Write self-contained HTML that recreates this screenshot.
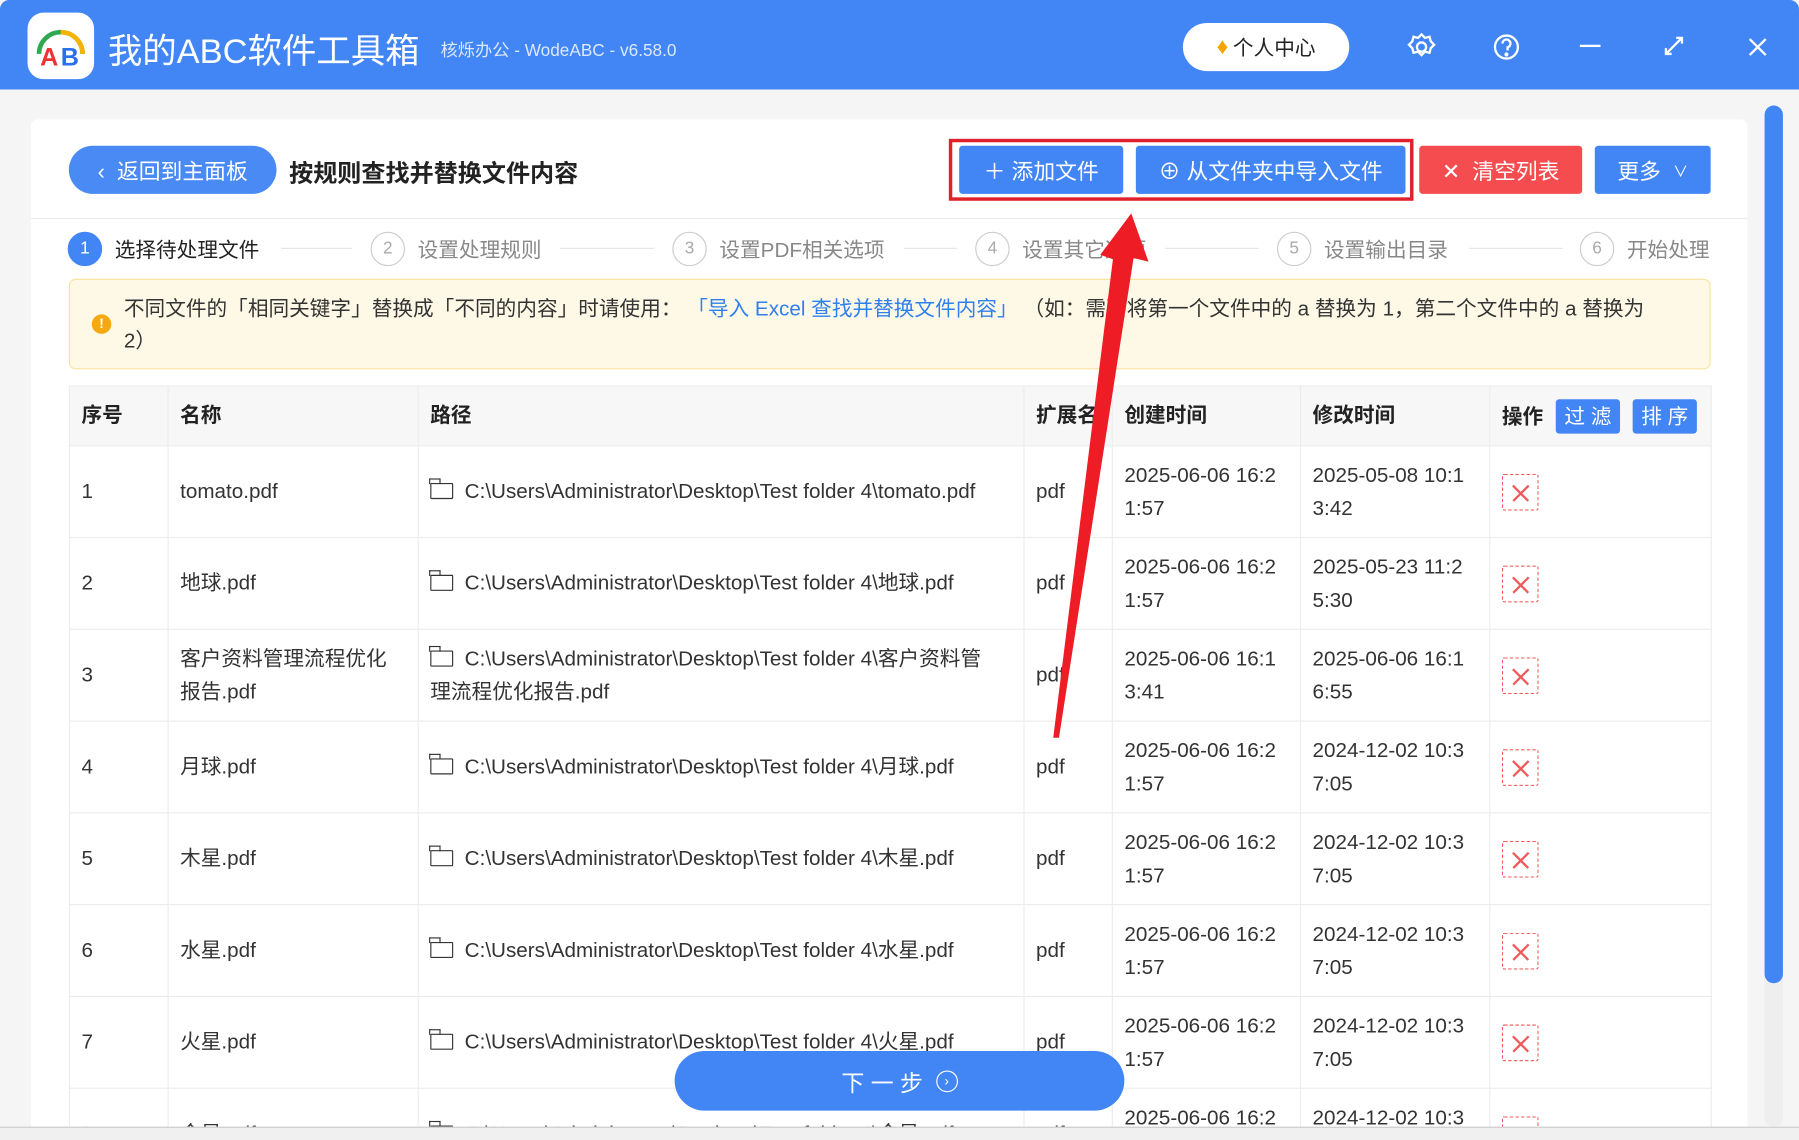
<!DOCTYPE html>
<html><head><meta charset="utf-8">
<style>
*{margin:0;padding:0;box-sizing:border-box}
body{width:1799px;height:1140px;overflow:hidden;background:#f0f0f0;font-family:"Liberation Sans","Noto Sans CJK SC",sans-serif}
#s{position:absolute;left:0;top:0;width:1568px;height:994px;transform:scale(1.14732);transform-origin:0 0;background:#f5f5f5;overflow:hidden}
.a{position:absolute}
.hdr{left:0;top:0;width:1568px;height:78px;background:#4286f5;border-radius:8px 8px 0 0}
.btn{position:absolute;color:#fff;font-size:18px;display:flex;align-items:center;justify-content:center;border-radius:3px}
.step{position:absolute;top:202px;font-size:18px;color:#888;display:flex;align-items:center}
.step i{display:inline-block;width:30px;height:30px;border:1px solid #ccc;border-radius:50%;font-style:normal;text-align:center;line-height:28px;font-size:15px;color:#aaa;margin-right:11px}
.line{position:absolute;top:216px;height:1px;background:#e6e6e6}
table{position:absolute;left:60px;top:336px;border-collapse:collapse;font-size:18px;color:#333;table-layout:fixed}
td,th{border:1px solid #ececec;padding:0 10px;text-align:left;vertical-align:middle;line-height:29px;white-space:nowrap;overflow:hidden}
th{height:52px;background:#f7f7f7;font-weight:bold;color:#222}
td{height:80px}
.del{display:inline-block;width:32px;height:32px;border:1px dashed #f05a5a;position:relative;border-radius:2px;vertical-align:middle}
.del:before,.del:after{content:"";position:absolute;left:6px;top:15px;width:19px;height:1.5px;background:#f05a5a;transform:rotate(45deg)}
.del:after{transform:rotate(-45deg)}
.fo{display:inline-block;width:20px;height:14px;border:1.6px solid #333;border-radius:1px;margin-right:10px;vertical-align:-1px;position:relative}
.fo:before{content:"";position:absolute;left:-2px;top:-5px;width:8px;height:4px;border:1.6px solid #333;border-bottom:none}
</style></head><body>
<div id="s">
<div class="a hdr"></div>
<div class="a" style="left:24px;top:11px;width:58px;height:58px;background:#fff;border-radius:14px"></div>
<svg class="a" style="left:24px;top:11px" width="58" height="58" viewBox="0 0 58 58">
<path d="M10 36 A19 19 0 0 1 48 36" fill="none" stroke="#2fa84f" stroke-width="4"/>
<path d="M29 17 A19 19 0 0 1 48 36" fill="none" stroke="#f6b400" stroke-width="4"/>
<text x="11" y="46" font-family="Liberation Sans" font-weight="bold" font-size="22" fill="#e33">A</text>
<text x="29" y="46" font-family="Liberation Sans" font-weight="bold" font-size="22" fill="#2a6ff0">B</text>
</svg>
<div class="a" style="left:94px;top:20px;font-size:30px;color:#fff">我的ABC软件工具箱</div>
<div class="a" style="left:384px;top:33px;font-size:15px;color:#dce8fd">核烁办公 - WodeABC - v6.58.0</div>
<div class="a" style="left:1031px;top:20px;width:145px;height:42px;background:#fff;border-radius:21px;font-size:18px;color:#222;display:flex;align-items:center;justify-content:center"><span style="color:#f6a400;margin-right:4px;font-size:20px">♦</span>个人中心</div>
<svg class="a" style="left:1226px;top:28px" width="26" height="26" viewBox="0 0 26 26" fill="none" stroke="#fff" stroke-width="2"><circle cx="13" cy="13" r="4"/><path d="M13 2l3 3 4-1 1 4 3 3-3 3-1 4-4-1-3 3-3-3-4 1-1-4-3-3 3-3 1-4 4 1z"/></svg>
<svg class="a" style="left:1300px;top:28px" width="26" height="26" viewBox="0 0 26 26" fill="none" stroke="#fff" stroke-width="2"><circle cx="13" cy="13" r="10"/><path d="M9.5 10a3.5 3.5 0 1 1 4.5 3.3V16"/><circle cx="13" cy="19.5" r=".8" fill="#fff"/></svg>
<div class="a" style="left:1377px;top:39px;width:18px;height:2px;background:#fff"></div>
<svg class="a" style="left:1449px;top:30px" width="20" height="20" viewBox="0 0 20 20" fill="none" stroke="#fff" stroke-width="2"><path d="M3 17L17 3M12 3h5v5M3 12v5h5"/></svg>
<svg class="a" style="left:1522px;top:31px" width="20" height="20" viewBox="0 0 20 20" stroke="#fff" stroke-width="2"><path d="M3 3L17 17M17 3L3 17"/></svg>

<div class="a" style="left:27px;top:104px;width:1496px;height:900px;background:#fff;border-radius:6px"></div>
<div class="a" style="left:27px;top:190px;width:1496px;height:1px;background:#ececec"></div>
<div class="btn" style="left:60px;top:127px;width:181px;height:42px;border-radius:21px;background:#4a8af4;font-size:19px">‹&nbsp;&nbsp;返回到主面板</div>
<div class="a" style="left:252px;top:135px;font-size:21px;font-weight:bold;color:#222">按规则查找并替换文件内容</div>
<div class="a" style="left:827px;top:121px;width:405px;height:54px;border:3px solid #e0202a"></div>
<div class="btn" style="left:836px;top:127px;width:143px;height:42px;background:#4286f5;font-size:19px">＋ 添加文件</div>
<div class="btn" style="left:990px;top:127px;width:235px;height:42px;background:#4286f5;font-size:19px">⊕ 从文件夹中导入文件</div>
<div class="btn" style="left:1237px;top:127px;width:142px;height:42px;background:#f54c4f;font-size:19px">✕&nbsp; 清空列表</div>
<div class="btn" style="left:1390px;top:127px;width:101px;height:42px;background:#4286f5;font-size:19px">更多 &nbsp;<span style="font-size:13px">∨</span></div>

<div class="step" style="left:59px;color:#222"><i style="background:#4286f5;border-color:#4286f5;color:#fff">1</i>选择待处理文件</div>
<div class="line" style="left:245px;width:62px"></div>
<div class="step" style="left:323px"><i>2</i>设置处理规则</div>
<div class="line" style="left:488px;width:82px"></div>
<div class="step" style="left:586px"><i>3</i>设置PDF相关选项</div>
<div class="line" style="left:788px;width:46px"></div>
<div class="step" style="left:850px"><i>4</i>设置其它选项</div>
<div class="line" style="left:1015px;width:82px"></div>
<div class="step" style="left:1113px"><i>5</i>设置输出目录</div>
<div class="line" style="left:1280px;width:82px"></div>
<div class="step" style="left:1377px"><i>6</i>开始处理</div>

<div class="a" style="left:60px;top:243px;width:1431px;height:79px;background:#fef9e6;border:1px solid #f8e3a0;border-radius:6px"></div>
<div class="a" style="left:80px;top:274px;width:17px;height:17px;border-radius:50%;background:#f6a90e;color:#fff;font-size:12px;font-weight:bold;text-align:center;line-height:17px">!</div>
<div class="a" style="left:108px;top:255px;width:1345px;font-size:18px;line-height:28px;color:#333">不同文件的「相同关键字」替换成「不同的内容」时请使用： <span style="color:#2f7fef">「导入 Excel 查找并替换文件内容」</span> （如：需要将第一个文件中的 a 替换为 1，第二个文件中的 a 替换为<br>2）</div>

<table>
<colgroup><col style="width:86px"><col style="width:218px"><col style="width:528px"><col style="width:77px"><col style="width:164px"><col style="width:165px"><col style="width:193px"></colgroup>
<tr><th>序号</th><th>名称</th><th>路径</th><th>扩展名</th><th>创建时间</th><th>修改时间</th><th>操作 <span style="display:inline-block;background:#4286f5;color:#fff;font-weight:normal;width:56px;height:30px;line-height:30px;text-align:center;border-radius:3px;margin-left:6px">过 滤</span> <span style="display:inline-block;background:#4286f5;color:#fff;font-weight:normal;width:56px;height:30px;line-height:30px;text-align:center;border-radius:3px;margin-left:6px">排 序</span></th></tr>
<tr><td>1</td><td>tomato.pdf</td><td><span class="fo"></span>C:\Users\Administrator\Desktop\Test folder 4\tomato.pdf</td><td>pdf</td><td>2025-06-06 16:2<br>1:57</td><td>2025-05-08 10:1<br>3:42</td><td><span class="del"></span></td></tr>
<tr><td>2</td><td>地球.pdf</td><td><span class="fo"></span>C:\Users\Administrator\Desktop\Test folder 4\地球.pdf</td><td>pdf</td><td>2025-06-06 16:2<br>1:57</td><td>2025-05-23 11:2<br>5:30</td><td><span class="del"></span></td></tr>
<tr><td>3</td><td>客户资料管理流程优化<br>报告.pdf</td><td><span class="fo"></span>C:\Users\Administrator\Desktop\Test folder 4\客户资料管<br>理流程优化报告.pdf</td><td>pdf</td><td>2025-06-06 16:1<br>3:41</td><td>2025-06-06 16:1<br>6:55</td><td><span class="del"></span></td></tr>
<tr><td>4</td><td>月球.pdf</td><td><span class="fo"></span>C:\Users\Administrator\Desktop\Test folder 4\月球.pdf</td><td>pdf</td><td>2025-06-06 16:2<br>1:57</td><td>2024-12-02 10:3<br>7:05</td><td><span class="del"></span></td></tr>
<tr><td>5</td><td>木星.pdf</td><td><span class="fo"></span>C:\Users\Administrator\Desktop\Test folder 4\木星.pdf</td><td>pdf</td><td>2025-06-06 16:2<br>1:57</td><td>2024-12-02 10:3<br>7:05</td><td><span class="del"></span></td></tr>
<tr><td>6</td><td>水星.pdf</td><td><span class="fo"></span>C:\Users\Administrator\Desktop\Test folder 4\水星.pdf</td><td>pdf</td><td>2025-06-06 16:2<br>1:57</td><td>2024-12-02 10:3<br>7:05</td><td><span class="del"></span></td></tr>
<tr><td>7</td><td>火星.pdf</td><td><span class="fo"></span>C:\Users\Administrator\Desktop\Test folder 4\火星.pdf</td><td>pdf</td><td>2025-06-06 16:2<br>1:57</td><td>2024-12-02 10:3<br>7:05</td><td><span class="del"></span></td></tr>
<tr><td>8</td><td>金星.pdf</td><td><span class="fo"></span>C:\Users\Administrator\Desktop\Test folder 4\金星.pdf</td><td>pdf</td><td>2025-06-06 16:2<br>1:57</td><td>2024-12-02 10:3<br>7:05</td><td><span class="del"></span></td></tr>
</table>

<div class="btn" style="left:588px;top:916px;width:392px;height:52px;border-radius:26px;background:#4286f5;font-size:20px">下 一 步 &nbsp;<span style="display:inline-block;width:19px;height:19px;border:1.6px solid #fff;border-radius:50%;font-size:12px;line-height:16px;text-align:center">›</span></div>

<div class="a" style="left:1538px;top:92px;width:16px;height:890px;background:#eee;border-radius:8px"></div>
<div class="a" style="left:1538px;top:92px;width:16px;height:765px;background:#4286f5;border-radius:8px"></div>
<div class="a" style="left:0;top:982px;width:1568px;height:12px;background:#f0f0f0;border-top:1px solid #ccc"></div>

<svg class="a" style="left:0;top:0" width="1568" height="994"><polygon points="986,186 1001,228 988,225 923,643 918,643 970,226 959,222" fill="#ee1c25"/></svg>
</div>
</body></html>
